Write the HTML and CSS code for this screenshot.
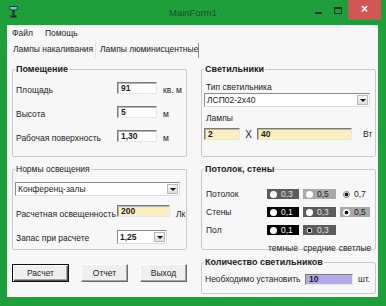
FILE: index.html
```html
<!DOCTYPE html>
<html lang="ru">
<head>
<meta charset="utf-8">
<title>MainForm1</title>
<link rel="stylesheet" href="styles.css">
</head>
<body>
<div class="window">
  <div class="titlebar">
    <div class="tb-left">
      <svg class="appicon" width="9" height="12" viewBox="0 0 9 12">
        <path d="M0.5 0.5 H8.5 V2 Q8.5 4 6 4 H3 Q0.5 4 0.5 2 Z" fill="#55d4d4" stroke="#163a40" stroke-width="1"/>
        <rect x="3.5" y="4" width="2" height="5.5" fill="#1d2a30"/>
        <rect x="1.5" y="9.5" width="6" height="2" fill="#1d2a30"/>
      </svg>
    </div>
    <div class="title">MainForm1</div>
    <div class="controls">
      <span class="ctl-min"></span>
      <span class="ctl-max"></span>
      <span class="ctl-close">×</span>
    </div>
  </div>
  <div class="client">
    <div class="menubar"><span>Файл</span><span>Помощь</span></div>
    <div class="tabs">
      <div class="tab tab-1">Лампы накаливания</div>
      <div class="tab tab-2">Лампы люминисцентные</div>
    </div>
    <div class="page">
      <fieldset class="gb">
        <legend class="bold">Помещение</legend>
        <div class="room">
          <span class="lbl">Площадь</span><span class="tb">91</span><span class="lbl unit">кв. м</span>
          <span class="lbl">Высота</span><span class="tb">5</span><span class="lbl unit">м</span>
          <span class="lbl">Рабочая поверхность</span><span class="tb">1,30</span><span class="lbl unit">м</span>
        </div>
      </fieldset>

      <fieldset class="gb">
        <legend class="bold">Светильники</legend>
        <div class="lamps">
          <div class="lbl-line">Тип светильника</div>
          <div class="combo combo-type"><span class="combo-text">ЛСП02-2х40</span><span class="drop"></span></div>
          <div class="lbl-line lamps-lbl">Лампы</div>
          <div class="lamps-row">
            <span class="tb yellow tb-n">2</span>
            <span class="times">X</span>
            <span class="tb yellow tb-w">40</span>
            <span class="unit-w">Вт</span>
          </div>
        </div>
      </fieldset>

      <fieldset class="gb">
        <legend>Нормы освещения</legend>
        <div class="norms">
          <div class="combo combo-norm"><span class="combo-text">Конференц-залы</span><span class="drop"></span></div>
          <div class="norm-row norm-row-1">
            <span class="lbl">Расчетная освещенность</span><span class="tb yellow">200</span><span class="lbl unit">Лк</span>
          </div>
          <div class="norm-row norm-row-2">
            <span class="lbl">Запас при расчете</span>
            <div class="combo combo-k"><span class="combo-text bold">1,25</span><span class="drop"></span></div>
          </div>
        </div>
      </fieldset>

      <fieldset class="gb">
        <legend class="bold">Потолок, стены</legend>
        <div class="refl">
          <span class="rlbl">Потолок</span>
          <span class="rb c-dark"><i class="dot"></i>0,3</span>
          <span class="rb c-mid"><i class="dot"></i>0,5</span>
          <span class="rb c-white"><i class="dot on ring"></i>0,7</span>

          <span class="rlbl">Стены</span>
          <span class="rb c-black"><i class="dot"></i>0,1</span>
          <span class="rb c-dark"><i class="dot"></i>0,3</span>
          <span class="rb c-mid c-mid-txt"><i class="dot on"></i>0,5</span>

          <span class="rlbl">Пол</span>
          <span class="rb c-black"><i class="dot"></i>0,1</span>
          <span class="rb c-dark"><i class="dot on ring"></i>0,3</span>
          <span class="rb-empty"></span>

          <span class="rb-empty"></span>
          <span class="cap">темные</span>
          <span class="cap">средние</span>
          <span class="cap">светлые</span>
        </div>
      </fieldset>

      <div class="buttons">
        <span class="btn btn-default btn-calc">Расчет</span>
        <span class="btn">Отчет</span>
        <span class="btn">Выход</span>
      </div>

      <fieldset class="gb">
        <legend class="bold">Количество светильников</legend>
        <div class="count">
          <span class="count-lbl">Необходимо установить</span>
          <span class="tb lavender tb-count">10</span>
          <span class="count-unit">шт.</span>
        </div>
      </fieldset>
    </div>
  </div>
</div>
</body>
</html>
```

FILE: styles.css
```css
* { box-sizing: border-box; }
html, body { margin: 0; padding: 0; }
body {
  width: 386px;
  height: 306px;
  overflow: hidden;
  background: #1e9f3c;
  font-family: "Liberation Sans", Arial, sans-serif;
  font-size: 8.5px;
  line-height: 11px;
  color: #1c1c1c;
}
.bold { font-weight: bold; }

.window {
  width: 386px;
  height: 306px;
  background: #1e9f3c;
  display: flex;
  flex-direction: column;
}

/* title bar */
.titlebar {
  height: 25px;
  flex: none;
  display: grid;
  grid-template-columns: 1fr auto 1fr;
  align-items: start;
}
.tb-left { padding: 6px 0 0 9px; }
.appicon { display: block; }
.title {
  padding-top: 7px;
  font-size: 9.5px;
  line-height: 12px;
  color: #16501f;
}
.controls {
  justify-self: end;
  display: flex;
  align-items: flex-start;
  padding-right: 5px;
}
.ctl-min {
  width: 7px;
  height: 2px;
  margin-top: 12px;
  margin-right: 12px;
  background: #1b3a22;
}
.ctl-max {
  width: 8px;
  height: 7px;
  margin-top: 7px;
  margin-right: 6px;
  border: 1px solid #1b3a22;
  border-top-width: 2px;
}
.ctl-close {
  width: 33px;
  height: 20px;
  background: #d35656;
  color: #fff;
  font-size: 12px;
  font-weight: bold;
  line-height: 19px;
  text-align: center;
}

/* client */
.client {
  flex: 1;
  margin: 0 8px 9px 7px;
  background: #f7f7f7;
  display: flex;
  flex-direction: column;
  min-height: 0;
}
.menubar {
  height: 17px;
  flex: none;
  display: flex;
  align-items: center;
  gap: 12px;
  padding-left: 5px;
}
.tabs {
  height: 18px;
  flex: none;
  display: flex;
  align-items: flex-start;
  padding-left: 1px;
}
.tab {
  height: 15px;
  margin-top: 1px;
  line-height: 13px;
  padding-left: 5px;
  white-space: nowrap;
}
.tab-1 { width: 87px; }
.tab-2 {
  width: 104px;
  border-right: 1px solid #8f8f8f;
  border-left: 1px solid #e2e2e2;
  padding-left: 4px;
}

.page {
  flex: 1;
  display: grid;
  grid-template-columns: 175px 175px;
  grid-template-rows: 93px 86px 37px;
  column-gap: 14px;
  row-gap: 7px;
  padding: 4px 2px 0 5px;
  align-content: start;
}

/* group boxes */
.gb {
  margin: 0;
  padding: 0;
  min-width: 0;
  border: 1px solid #c9c9c9;
  border-radius: 2px;
}
.gb legend {
  padding: 0 1px;
  margin-left: 2px;
  line-height: 10px;
  font-size: 8.5px;
}
.gb legend.bold { font-size: 9px; }

/* inputs */
.tb {
  display: block;
  height: 12px;
  border: 1px solid;
  border-color: #7b7b7b #e6e6e6 #e6e6e6 #7b7b7b;
  box-shadow: inset 1px 1px 0 #b4b4b4;
  background: #fff;
  font-weight: bold;
  line-height: 10px;
  padding: 0 3px;
}
.yellow { background: #fcefbd; }
.lavender { background: #b3a9ea; }

.combo {
  display: flex;
  align-items: center;
  height: 14px;
  border: 1px solid;
  border-color: #8a8a8a #dcdcdc #dcdcdc #8a8a8a;
  background: #fff;
}
.combo-text {
  flex: 1;
  padding-left: 2px;
  line-height: 11px;
  white-space: nowrap;
}
.drop {
  width: 11px;
  height: 10px;
  margin-right: 1px;
  border: 1px solid #b9b9b9;
  background: linear-gradient(#f6f6f6, #dedede);
  display: flex;
  align-items: center;
  justify-content: center;
}
.drop::after {
  content: "";
  border-left: 3px solid transparent;
  border-right: 3px solid transparent;
  border-top: 3px solid #111;
}

/* room group */
.room {
  display: grid;
  grid-template-columns: 101px 40px auto;
  row-gap: 10px;
  align-items: start;
  padding: 8px 0 0 3px;
}
.lbl { padding-top: 3px; white-space: nowrap; }
.unit { padding-left: 6px; }

/* lamps group */
.lamps { padding: 8px 0 0 4px; }
.lbl-line { height: 11px; }
.combo-type { margin-left: -2px; width: 166px; }
.lamps-lbl { margin-top: 6px; }
.lamps-row {
  margin-top: 4px;
  margin-left: -2px;
  display: flex;
  align-items: center;
}
.tb-n { width: 36px; }
.tb-w { width: 95px; }
.times {
  width: 17px;
  text-align: center;
  font-size: 10px;
}
.unit-w { margin-left: 11px; }

/* norms group */
.norms { padding: 8px 0 0 3px; }
.combo-norm { margin-left: -1px; width: 165px; }
.norm-row {
  display: grid;
  align-items: start;
}
.norm-row-1 {
  grid-template-columns: 101px 53px auto;
  margin-top: 9px;
}
.norm-row-2 {
  grid-template-columns: 101px 50px;
  margin-top: 10px;
}
.norm-row-1 .lbl { padding-top: 4px; }

/* reflectance group */
.refl {
  display: grid;
  grid-template-columns: 57px 32px 33px 30px;
  grid-auto-rows: 10px;
  column-gap: 4px;
  row-gap: 8px;
  padding: 15px 0 0 4px;
  align-items: center;
}
.rlbl { line-height: 10px; }
.rb {
  height: 10px;
  display: flex;
  align-items: center;
  gap: 4px;
  padding-left: 3px;
  line-height: 10px;
}
.dot {
  width: 7px;
  height: 7px;
  border-radius: 50%;
  background: #fff;
  flex: none;
}
.dot.on { background: radial-gradient(circle, #111 0 1.6px, #fff 2.2px); }
.dot.ring { border: 1px solid #777; }
.c-black { background: #050505; color: #f2f2f2; }
.c-dark { background: #5c5c5c; color: #e0e0e0; }
.c-mid { background: #a9a9a9; color: #1a1a1a; }
.c-white { background: transparent; color: #1a1a1a; }
.cap {
  justify-self: center;
  white-space: nowrap;
  line-height: 10px;
}

/* buttons */
.buttons {
  display: flex;
  align-items: flex-start;
  gap: 12px;
  padding-top: 7px;
}
.btn {
  width: 47px;
  height: 18px;
  display: flex;
  align-items: center;
  justify-content: center;
  background: #efefef;
  border: 1px solid;
  border-color: #ffffff #6a6a6a #6a6a6a #ffffff;
  box-shadow: inset -1px -1px 0 #a3a3a3;
}
.btn-calc { width: 57px; }
.btn-default {
  border: 1px solid #111;
  box-shadow: inset 1px 1px 0 #fff, inset -1px -1px 0 #555, inset -2px -2px 0 #a3a3a3;
}

/* count group */
.count {
  display: flex;
  align-items: center;
  padding: 7px 0 0 3px;
}
.count-lbl { width: 100px; white-space: nowrap; }
.tb-count { width: 48px; height: 11px; line-height: 9px; }
.count-unit { margin-left: 5px; }
```
